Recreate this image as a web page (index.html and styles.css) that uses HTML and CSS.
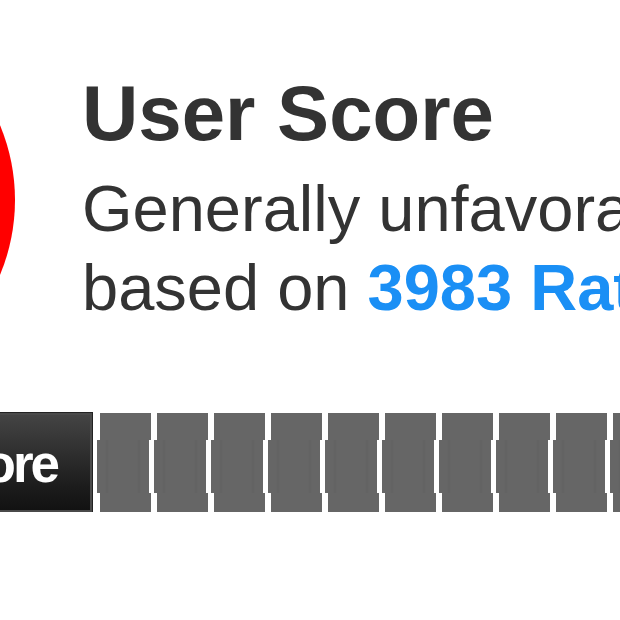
FILE: index.html
```html
<!DOCTYPE html>
<html lang="en">

<head>
    <meta charset="UTF-8">
    <meta name="viewport" content="width=device-width, initial-scale=1.0">
    <title>User Score</title>
    <link rel="stylesheet" href="styles.css">
</head>

<body>
    <div class="score-header">
        <div class="badge"></div>
        <div class="info">
            <h1 class="title">User Score</h1>
            <p class="summary">Generally unfavorable reviews</p>
            <p class="summary">based on <a class="count" href="#">3983 Ratings</a></p>
        </div>
    </div>

    <div class="rating">
        <div class="your-score">Your Score</div>
        <div class="seg"><div class="seg-top"></div><div class="seg-mid"></div><div class="seg-bot"></div></div>
        <div class="seg"><div class="seg-top"></div><div class="seg-mid"></div><div class="seg-bot"></div></div>
        <div class="seg"><div class="seg-top"></div><div class="seg-mid"></div><div class="seg-bot"></div></div>
        <div class="seg"><div class="seg-top"></div><div class="seg-mid"></div><div class="seg-bot"></div></div>
        <div class="seg"><div class="seg-top"></div><div class="seg-mid"></div><div class="seg-bot"></div></div>
        <div class="seg"><div class="seg-top"></div><div class="seg-mid"></div><div class="seg-bot"></div></div>
        <div class="seg"><div class="seg-top"></div><div class="seg-mid"></div><div class="seg-bot"></div></div>
        <div class="seg"><div class="seg-top"></div><div class="seg-mid"></div><div class="seg-bot"></div></div>
        <div class="seg"><div class="seg-top"></div><div class="seg-mid"></div><div class="seg-bot"></div></div>
        <div class="seg"><div class="seg-top"></div><div class="seg-mid"></div><div class="seg-bot"></div></div>
        <div class="seg"><div class="seg-top"></div><div class="seg-mid"></div><div class="seg-bot"></div></div>
    </div>
</body>

</html>
```

FILE: styles.css
```css
body {
    font-family: "Liberation Sans", Arial, sans-serif;
    background-color: #fff;
    color: #333;
    margin: 0;
    padding: 0;
    overflow: hidden;
}

.score-header {
    display: flex;
    align-items: flex-start;
}

/* score circle, mostly off the left edge */
.badge {
    flex: none;
    width: 390px;
    height: 390px;
    margin-top: 5px;
    margin-left: -375px;
    border-radius: 50%;
    background-color: #f00;
}

.info {
    flex: none;
    margin-left: 67px;
    padding-top: 74px;
    white-space: nowrap;
}

.title {
    margin: 0 0 17px;
    font-size: 78px;
    line-height: 78px;
    font-weight: bold;
    color: #333;
}

.summary {
    margin: 0;
    font-size: 65px;
    line-height: 79px;
}

.count {
    color: #1a8ff5;
    font-weight: bold;
    text-decoration: none;
}

.rating {
    display: flex;
    margin-top: 18px;
    height: 99px;
}

.your-score {
    flex: none;
    width: 300px;
    margin-left: -208px;
    display: flex;
    align-items: center;
    justify-content: flex-end;
    padding-right: 33px;
    padding-top: 2px;
    box-sizing: border-box;
    border: 2px solid #4a4a4a;
    outline: 1px solid #222;
    background: linear-gradient(#444, #1c1c1c 75%, #121212);
    color: #fff;
    font-size: 53px;
    font-weight: bold;
    letter-spacing: -3px;
}

.seg {
    flex: none;
    width: 51px;
    margin-left: 6px;
    display: flex;
    flex-direction: column;
}

.your-score + .seg {
    margin-left: 8px;
}

.seg-top {
    height: 27px;
    background-color: #666;
}

.seg-mid {
    height: 53px;
    width: 52px;
    margin-left: -3px;
    background: linear-gradient(90deg, #666 0, #666 8px, #626262 10px, #666 12px, #666 40px, #626262 42px, #666 44px);
}

.seg-bot {
    height: 19px;
    background-color: #666;
}
```
